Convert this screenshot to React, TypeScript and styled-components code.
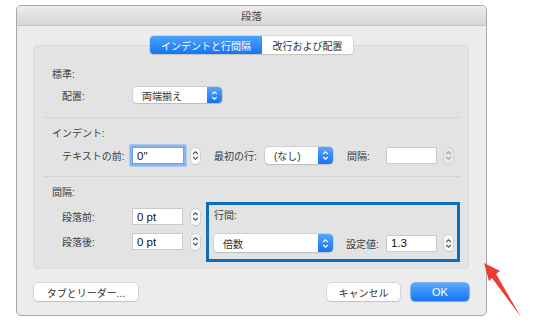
import React from 'react';
import styled, { createGlobalStyle } from 'styled-components';

const GlobalStyle = createGlobalStyle`
  html, body {
    margin: 0;
    padding: 0;
    background: #ffffff;
  }
  body {
    font-family: "Liberation Sans", "Noto Sans CJK JP", sans-serif;
    font-size: 10px;
    color: #333;
  }
`;

const Page = styled.div`
  position: relative;
  width: 537px;
  height: 336px;
  padding: 5px 0 0 16px;
  box-sizing: border-box;
`;

const Dialog = styled.div`
  width: 471px;
  height: 311px;
  box-sizing: border-box;
  border: 1px solid #a9a9a9;
  border-radius: 5px;
  background: #ececec;
  display: flex;
  flex-direction: column;
  overflow: hidden;
`;

const TitleBar = styled.div`
  height: 19px;
  background: linear-gradient(#ececec, #d6d6d6);
  border-bottom: 1px solid #c4c4c4;
  display: flex;
  align-items: center;
  justify-content: center;
  font-size: 10.5px;
  color: #4a4a4a;
`;

const Body = styled.div`
  display: flex;
  flex-direction: column;
  padding: 10px 17px 0 16px;
`;

const Tabs = styled.div`
  align-self: center;
  display: flex;
  height: 18px;
  margin-left: 1px;
  border-radius: 4px;
  box-shadow: 0 0 0 0.5px #c2c2c2, 0 1px 1px rgba(0, 0, 0, 0.12);
  overflow: hidden;
  position: relative;
  z-index: 1;
`;

const Tab = styled.div<{ $active?: boolean; $w: number }>`
  width: ${(p) => p.$w}px;
  display: flex;
  align-items: center;
  justify-content: center;
  font-size: 10px;
  color: ${(p) => (p.$active ? '#fff' : '#333')};
  background: ${(p) => (p.$active ? 'linear-gradient(#4ea2fd, #1576f4)' : '#fff')};
`;

const GroupBox = styled.div`
  margin-top: -9px;
  height: 224px;
  box-sizing: border-box;
  background: #e3e3e3;
  border: 1px solid #dadada;
  border-radius: 4px;
  padding-top: 13px;
  display: flex;
  flex-direction: column;
`;

const Section = styled.div<{ $divided?: boolean }>`
  display: flex;
  flex-direction: column;
  margin: 0 8px 0 10px;
  border-top: ${(p) => (p.$divided ? '1px solid #d3d3d3' : 'none')};
  padding-top: 9px;
`;

const Heading = styled.div<{ $indent?: number }>`
  height: 14px;
  line-height: 14px;
  padding-left: ${(p) => p.$indent ?? 8}px;
  color: #3c3c3c;
`;

const Row = styled.div<{ $top?: number; $bottom?: number }>`
  display: flex;
  align-items: center;
  padding-left: 18px;
  margin-top: ${(p) => p.$top ?? 5}px;
  margin-bottom: ${(p) => p.$bottom ?? 0}px;
`;

const Label = styled.div<{ $w: number; $ml?: number }>`
  width: ${(p) => p.$w}px;
  margin-left: ${(p) => p.$ml ?? 0}px;
  flex-shrink: 0;
  color: #3c3c3c;
  white-space: nowrap;
`;

const Select = styled.div<{ $w: number; $h?: number }>`
  width: ${(p) => p.$w}px;
  height: ${(p) => p.$h ?? 17}px;
  box-sizing: border-box;
  display: flex;
  background: #fff;
  border-radius: 4px;
  box-shadow: 0 0 0 0.5px #bcbcbc, 0 1px 1px rgba(0, 0, 0, 0.15);
  overflow: hidden;
`;

const SelectText = styled.div`
  flex: 1;
  display: flex;
  align-items: center;
  padding-left: 9px;
  color: #333;
`;

const SelectArrow = styled.div`
  width: 15px;
  display: flex;
  align-items: center;
  justify-content: center;
  background: linear-gradient(#57a6fd, #1a72f1);
`;

const Input = styled.div<{ $w: number; $focus?: boolean }>`
  width: ${(p) => p.$w}px;
  height: 17px;
  box-sizing: border-box;
  background: #fff;
  border: 1px solid ${(p) => (p.$focus ? '#6aa0ec' : '#c9c9c9')};
  box-shadow: ${(p) => (p.$focus ? '0 0 0 2.5px #86b5f3' : 'none')};
  display: flex;
  align-items: center;
  padding-left: 4px;
  color: #111;
  font-size: 11.5px;
`;

const Stepper = styled.div<{ $ml?: number; $faded?: boolean }>`
  width: 9px;
  height: 16px;
  margin-left: ${(p) => p.$ml ?? 7}px;
  box-sizing: border-box;
  border-radius: 4px;
  background: ${(p) => (p.$faded ? '#e9e9e9' : '#f8f8f8')};
  box-shadow: 0 0 0 0.5px #bdbdbd, 0 1px 1px rgba(0, 0, 0, 0.1);
  display: flex;
  align-items: center;
  justify-content: center;
  opacity: ${(p) => (p.$faded ? 0.7 : 1)};
`;

const SpacingArea = styled.div`
  display: flex;
  margin-top: 2px;
`;

const SpacingLeft = styled.div`
  display: flex;
  flex-direction: column;
  padding-top: 6px;
  gap: 8px;
`;

const Highlight = styled.div`
  margin-left: 6px;
  width: 260px;
  height: 60px;
  box-sizing: border-box;
  border: 3px solid #0b6fbe;
  padding: 4px 0 0 5px;
  display: flex;
  flex-direction: column;
`;

const HighlightRow = styled.div`
  display: flex;
  align-items: center;
  margin-top: 11px;
`;

const Footer = styled.div`
  display: flex;
  align-items: center;
  margin-top: 14px;
  padding-left: 1px;
`;

const Button = styled.div<{ $w: number; $primary?: boolean; $ml?: string }>`
  width: ${(p) => p.$w}px;
  height: 18px;
  margin-left: ${(p) => p.$ml ?? '0'};
  border-radius: 4px;
  display: flex;
  align-items: center;
  justify-content: center;
  font-size: ${(p) => (p.$primary ? '11px' : '10px')};
  color: ${(p) => (p.$primary ? '#fff' : '#333')};
  background: ${(p) => (p.$primary ? 'linear-gradient(#5aa9fd, #1775f4)' : '#fff')};
  box-shadow: ${(p) =>
    p.$primary
      ? '0 0 0 0.5px #2f7fe6, 0 1px 1px rgba(0,0,0,0.15)'
      : '0 0 0 0.5px #bdbdbd, 0 1px 1px rgba(0,0,0,0.15)'};
`;

const Arrow = styled.svg`
  position: absolute;
  left: 480px;
  top: 258px;
`;

const UpDown = ({ color }: { color: string }) => (
  <svg width="7" height="11" viewBox="0 0 7 11">
    <path d="M1.2 4 L3.5 1.8 L5.8 4 M1.2 7 L3.5 9.2 L5.8 7" fill="none" stroke={color} strokeWidth="1.1" />
  </svg>
);

const Dropdown = ({ w, h, text }: { w: number; h?: number; text: string }) => (
  <Select $w={w} $h={h}>
    <SelectText>{text}</SelectText>
    <SelectArrow>
      <UpDown color="#fff" />
    </SelectArrow>
  </Select>
);

export default function App() {
  return (
    <Page>
      <GlobalStyle />
      <Dialog>
        <TitleBar>段落</TitleBar>
        <Body>
          <Tabs>
            <Tab $active $w={112}>インデントと行間隔</Tab>
            <Tab $w={91}>改行および配置</Tab>
          </Tabs>
          <GroupBox>
            <Section>
              <Heading>標準:</Heading>
              <Row $top={5} $bottom={14}>
                <Label $w={71}>配置:</Label>
                <Dropdown w={89} h={16} text="両端揃え" />
              </Row>
            </Section>
            <Section $divided>
              <Heading>インデント:</Heading>
              <Row $top={6} $bottom={12}>
                <Label $w={70}>テキストの前:</Label>
                <Input $w={52} $focus>0"</Input>
                <Stepper>
                  <UpDown color="#555" />
                </Stepper>
                <Label $w={51} $ml={14}>最初の行:</Label>
                <Dropdown w={68} text="(なし)" />
                <Label $w={39} $ml={14}>間隔:</Label>
                <Input $w={51} />
                <Stepper $faded>
                  <UpDown color="#888" />
                </Stepper>
              </Row>
            </Section>
            <Section $divided>
              <Heading>間隔:</Heading>
              <SpacingArea>
                <SpacingLeft>
                  <Row $top={0}>
                    <Label $w={70}>段落前:</Label>
                    <Input $w={51}>0 pt</Input>
                    <Stepper $ml={8}>
                      <UpDown color="#555" />
                    </Stepper>
                  </Row>
                  <Row $top={0}>
                    <Label $w={70}>段落後:</Label>
                    <Input $w={51}>0 pt</Input>
                    <Stepper $ml={8}>
                      <UpDown color="#555" />
                    </Stepper>
                  </Row>
                </SpacingLeft>
                <Highlight>
                  <Heading $indent={0}>行間:</Heading>
                  <HighlightRow>
                    <Dropdown w={119} h={18} text="倍数" />
                    <Label $w={40} $ml={13}>設定値:</Label>
                    <Input $w={51}>1.3</Input>
                    <Stepper $ml={7}>
                      <UpDown color="#555" />
                    </Stepper>
                  </HighlightRow>
                </Highlight>
              </SpacingArea>
            </Section>
          </GroupBox>
          <Footer>
            <Button $w={104}>タブとリーダー...</Button>
            <Button $w={73} $ml="auto">キャンセル</Button>
            <Button $w={58} $primary $ml="11px">OK</Button>
          </Footer>
        </Body>
      </Dialog>
      <Arrow width="50" height="65" viewBox="480 258 50 65">
        <polygon points="484,263 500,271 496,274 521,317 492,278 489,281" fill="#ef3a36" />
      </Arrow>
    </Page>
  );
}
